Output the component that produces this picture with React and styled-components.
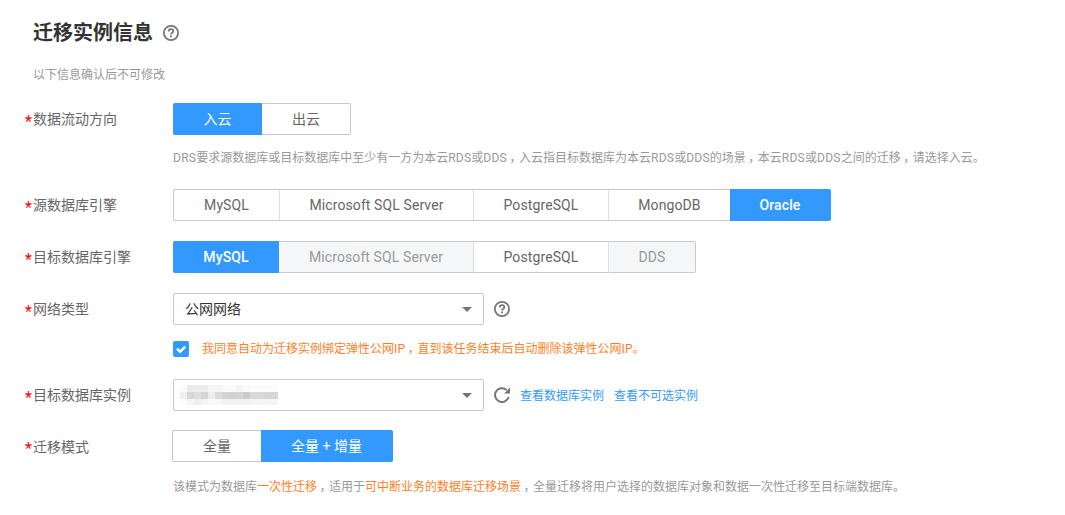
import React from "react";
import styled, { createGlobalStyle } from "styled-components";

const Global = createGlobalStyle`
  * { box-sizing: border-box; }
  body {
    margin: 0;
    background: #fff;
    font-family: Roboto, "Noto Sans CJK SC", sans-serif;
    font-size: 14px;
    color: #666;
  }
`;

const Page = styled.main`
  width: 1065px;
  height: 515px;
  overflow: hidden;
  padding: 18px 0 0 25px;
`;

const Header = styled.header`
  display: flex;
  align-items: center;
  gap: 10px;
  height: 30px;
  padding-left: 8px;
`;

const Title = styled.h1`
  margin: 0;
  font-size: 20px;
  line-height: 30px;
  font-weight: 700;
  color: #333;
`;

const Note = styled.p`
  margin: 18px 0 0 8px;
  font-size: 12px;
  line-height: 18px;
  color: #999;
`;

const Field = styled.div`
  display: flex;
  align-items: flex-start;
  margin-top: ${(p) => p.$gap || 20}px;
`;

const Label = styled.label`
  flex: none;
  display: flex;
  width: ${(p) => p.$width || 148}px;
  height: 32px;
  line-height: ${(p) => p.$line || 32}px;
  white-space: nowrap;
`;

const Star = styled.span`
  width: 8px;
  color: #f00;
  font-size: 16px;
  line-height: 38px;
`;

const Content = styled.div`
  display: flex;
  flex-direction: column;
`;

const Line = styled.div`
  display: flex;
  align-items: center;
  height: 32px;
`;

const Segments = styled.div`
  display: flex;
  height: 32px;
`;

const Segment = styled.button`
  width: ${(p) => p.$width}px;
  height: 32px;
  padding: 0 0 ${(p) => (p.$cjk ? 2 : 1)}px;
  font: inherit;
  font-weight: ${(p) => (p.$active && !p.$cjk ? 500 : 400)};
  letter-spacing: ${(p) => (p.$cjk ? 0 : 0.1)}px;
  text-align: center;
  white-space: nowrap;
  color: ${(p) => (p.$active ? "#fff" : p.disabled ? "#999" : "#666")};
  background: ${(p) => (p.$active ? "#39f" : p.disabled ? "#f5f6f8" : "#fff")};
  border: solid ${(p) => (p.$active ? "#39f" : "#c9c9c9")};
  border-width: 1px 0;
  border-left: ${(p) => (p.$active ? "0" : p.$divided ? "1px solid #dfdfdf" : "0")};
  &:first-child {
    border-left-width: ${(p) => (p.$active ? 0 : 1)}px;
    border-left-style: solid;
    border-left-color: #c9c9c9;
    border-radius: 2px 0 0 2px;
  }
  &:last-child {
    border-right: 1px solid ${(p) => (p.$active ? "#39f" : "#c9c9c9")};
    border-radius: 0 2px 2px 0;
  }
`;

const Help = styled.p`
  margin: ${(p) => p.$top || 14}px 0 0 ${(p) => p.$left || 0}px;
  font-size: 12px;
  line-height: 18px;
  white-space: nowrap;
  color: #999;
`;

const Comma = styled.span`
  padding-left: 2.5px;
  letter-spacing: -2.5px;
`;

const Latin = styled.span`
  letter-spacing: 0.25px;
`;

const Warn = styled.span`
  color: #ff7f27;
`;

const Select = styled.div`
  display: flex;
  align-items: center;
  justify-content: space-between;
  width: 311px;
  height: 32px;
  padding: 0 11px;
  border: 1px solid #c9c9c9;
  border-radius: 2px;
  color: #333;
  line-height: 30px;
`;

const Masked = styled.svg`
  display: block;
  margin-left: -5px;
`;

const Agree = styled.label`
  display: flex;
  align-items: center;
  height: 18px;
  margin-top: 15px;
  font-size: 12px;
  line-height: 18px;
  white-space: nowrap;
  color: #ff7f27;
`;

const Check = styled.span`
  display: flex;
  width: 16px;
  height: 16px;
  margin: 0 13px 0 0;
  border-radius: 2px;
  background: #39f;
`;

const AgreeText = styled.span`
  height: 18px;
`;

const IconSlot = styled.span`
  display: flex;
  margin-left: 10px;
`;

const Link = styled.a`
  margin: 0 0 2px 10px;
  font-size: 12px;
  color: #39f;
  white-space: nowrap;
`;

const HelpIcon = () => (
  <svg width="16" height="16" viewBox="0 0 16 16" fill="none" stroke="#757575">
    <circle cx="8" cy="8" r="7.1" strokeWidth="1.8" />
    <path d="M5.7 6.5C5.7 5 6.7 4.2 8 4.2s2.3.9 2.3 2.1c0 1.5-2.3 1.6-2.3 3.3" strokeWidth="1.8" />
    <path d="M8 10.5v1.8" strokeWidth="1.9" />
  </svg>
);

const RefreshIcon = () => (
  <svg width="16" height="16" viewBox="0 0 16 16">
    <path d="M14.6 10A6.9 6.9 0 1 1 12.6 3" fill="none" stroke="#757575" strokeWidth="2" />
    <path d="M16 .5v5.9h-5.9z" fill="#757575" />
  </svg>
);

const Caret = () => (
  <svg width="10" height="5" viewBox="0 0 10 5">
    <path d="M0 0h10L5 5z" fill="#757575" />
  </svg>
);

const maskRows = [
  ["#fafafa", "#ebebee", "#ececec", "#ececec", "#f5f5f5", "#f5f5f5", "#fafafa", "#fafafa", "#f5f5f5", "#fafafa", "#fcfcfc", "#fcfcfc", "#fcfcfc", "#fcfcfc"],
  ["#f4efee", "#d5d7db", "#e1dedb", "#d5d5d7", "#ededf0", "#dedad8", "#d4d4d4", "#d2d2d2", "#d5d5d6", "#cdcacc", "#d8d8d8", "#d9d9d9", "#d5d5d5", "#d6d6d6"],
  ["#fdfdfd", "#f5f5f5", "#efefef", "#f4f4f4", "#fafafa", "#f8f8f8", "#f2f2f2", "#f2f2f2", "#f3f3f3", "#f1f1f1", "#f4f4f4", "#f4f4f4", "#f5f5f5", "#f5f5f5"],
];

const MaskedName = () => (
  <Masked width="98" height="20" viewBox="0 0 98 20" shapeRendering="crispEdges">
    {maskRows.map((row, y) =>
      row.map((fill, x) => (
        <rect key={`${y}-${x}`} x={x * 7} y={y * 7} width="7" height="7" fill={fill} />
      ))
    )}
  </Masked>
);

const FieldLabel = ({ children, width, line }) => (
  <Label $width={width} $line={line}>
    <Star>*</Star>
    {children}
  </Label>
);

const Prose = ({ children }) =>
  children.split(/(，|[A-Z]+)/).map((part, i) => {
    if (part === "，") return <Comma key={i}>{part}</Comma>;
    if (/^[A-Z]+$/.test(part)) return <Latin key={i}>{part}</Latin>;
    return part;
  });

export default function App() {
  return (
    <Page>
      <Global />
      <Header>
        <Title>迁移实例信息</Title>
        <HelpIcon />
      </Header>
      <Note>以下信息确认后不可修改</Note>

      <Field $gap={19}>
        <FieldLabel>数据流动方向</FieldLabel>
        <Content>
          <Segments>
            <Segment $width={89} $active $cjk>入云</Segment>
            <Segment $width={89} $cjk>出云</Segment>
          </Segments>
          <Help>
            <Prose>DRS要求源数据库或目标数据库中至少有一方为本云RDS或DDS，入云指目标数据库为本云RDS或DDS的场景，本云RDS或DDS之间的迁移，请选择入云。</Prose>
          </Help>
        </Content>
      </Field>

      <Field $gap={22}>
        <FieldLabel>源数据库引擎</FieldLabel>
        <Segments>
          <Segment $width={106}>MySQL</Segment>
          <Segment $width={194} $divided>Microsoft SQL Server</Segment>
          <Segment $width={135} $divided>PostgreSQL</Segment>
          <Segment $width={122} $divided>MongoDB</Segment>
          <Segment $width={101} $active>Oracle</Segment>
        </Segments>
      </Field>

      <Field>
        <FieldLabel>目标数据库引擎</FieldLabel>
        <Segments>
          <Segment $width={106} $active>MySQL</Segment>
          <Segment $width={194} disabled>Microsoft SQL Server</Segment>
          <Segment $width={135} $divided>PostgreSQL</Segment>
          <Segment $width={88} $divided disabled>DDS</Segment>
        </Segments>
      </Field>

      <Field>
        <FieldLabel>网络类型</FieldLabel>
        <Content>
          <Line>
            <Select>
              公网网络
              <Caret />
            </Select>
            <IconSlot><HelpIcon /></IconSlot>
          </Line>
          <Agree>
            <Check>
              <svg width="16" height="16" viewBox="0 0 16 16" fill="none">
                <path d="M4 7.6l3.1 3.1L12.2 5.6" stroke="#fff" strokeWidth="2.4" />
              </svg>
            </Check>
            <AgreeText>
              <Prose>我同意自动为迁移实例绑定弹性公网IP，直到该任务结束后自动删除该弹性公网IP。</Prose>
            </AgreeText>
          </Agree>
        </Content>
      </Field>

      <Field $gap={21}>
        <FieldLabel>目标数据库实例</FieldLabel>
        <Line>
          <Select>
            <MaskedName />
            <Caret />
          </Select>
          <IconSlot><RefreshIcon /></IconSlot>
          <Link>查看数据库实例</Link>
          <Link>查看不可选实例</Link>
        </Line>
      </Field>

      <Field $gap={19}>
        <FieldLabel width={147} line={34}>迁移模式</FieldLabel>
        <Content>
          <Segments>
            <Segment $width={89} $cjk>全量</Segment>
            <Segment $width={132} $active $cjk>全量 + 增量</Segment>
          </Segments>
          <Help $top={16} $left={1}>
            <Prose>该模式为数据库</Prose>
            <Warn>一次性迁移</Warn>
            <Prose>，适用于</Prose>
            <Warn>可中断业务的数据库迁移场景</Warn>
            <Prose>，全量迁移将用户选择的数据库对象和数据一次性迁移至目标端数据库。</Prose>
          </Help>
        </Content>
      </Field>
    </Page>
  );
}
